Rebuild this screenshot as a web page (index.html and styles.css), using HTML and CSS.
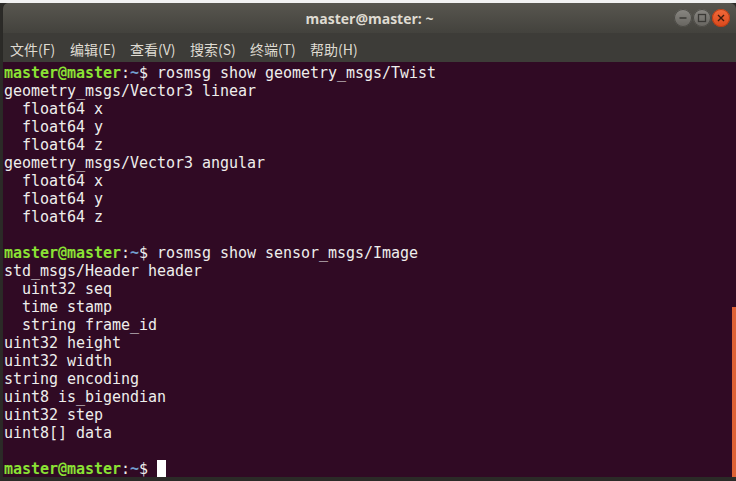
FILE: index.html
```html
<!DOCTYPE html>
<html lang="zh-CN">
<head>
    <meta charset="UTF-8">
    <title>master@master: ~</title>
    <link rel="stylesheet" href="styles.css">
</head>
<body>
    <div class="window">
        <div class="titlebar">
            <span class="title">master@master: ~</span>
            <div class="controls">
                <span class="btn btn-min"><svg width="10" height="10" viewBox="0 0 10 10"><path d="M1.5 5h7" stroke="#3a3935" stroke-width="1.4"/></svg></span>
                <span class="btn btn-max"><svg width="10" height="10" viewBox="0 0 10 10"><rect x="1.5" y="1.5" width="7" height="7" fill="none" stroke="#3a3935" stroke-width="1.3"/></svg></span>
                <span class="btn btn-close"><svg width="10" height="10" viewBox="0 0 10 10"><path d="M2 2l6 6M8 2l-6 6" stroke="#3c1a0c" stroke-width="1.4"/></svg></span>
            </div>
        </div>
        <div class="menubar">
            <span class="menu-item">文件(F)</span>
            <span class="menu-item">编辑(E)</span>
            <span class="menu-item">查看(V)</span>
            <span class="menu-item">搜索(S)</span>
            <span class="menu-item">终端(T)</span>
            <span class="menu-item">帮助(H)</span>
        </div>
        <div class="terminal">
            <div class="output">
                <div class="line"><span class="user">master@master</span>:<span class="path">~</span>$ rosmsg show geometry_msgs/Twist</div>
                <div class="line">geometry_msgs/Vector3 linear</div>
                <div class="line">  float64 x</div>
                <div class="line">  float64 y</div>
                <div class="line">  float64 z</div>
                <div class="line">geometry_msgs/Vector3 angular</div>
                <div class="line">  float64 x</div>
                <div class="line">  float64 y</div>
                <div class="line">  float64 z</div>
                <div class="line"></div>
                <div class="line"><span class="user">master@master</span>:<span class="path">~</span>$ rosmsg show sensor_msgs/Image</div>
                <div class="line">std_msgs/Header header</div>
                <div class="line">  uint32 seq</div>
                <div class="line">  time stamp</div>
                <div class="line">  string frame_id</div>
                <div class="line">uint32 height</div>
                <div class="line">uint32 width</div>
                <div class="line">string encoding</div>
                <div class="line">uint8 is_bigendian</div>
                <div class="line">uint32 step</div>
                <div class="line">uint8[] data</div>
                <div class="line"></div>
                <div class="line"><span class="user">master@master</span>:<span class="path">~</span>$ <span class="cursor"></span></div>
            </div>
            <div class="scrollbar"><div class="thumb"></div></div>
        </div>
    </div>
</body>
</html>
```

FILE: styles.css
```css
html, body {
    margin: 0;
    padding: 0;
}
body {
    width: 736px;
    height: 481px;
    overflow: hidden;
    padding-top: 3px;
    box-sizing: border-box;
    background: linear-gradient(#f2f2f2 0, #f2f2f2 3px, #2b2a27 3px);
}
.window {
    margin-left: 2px;
    display: flex;
    flex-direction: column;
    height: 474px;
    border-radius: 6px 6px 0 0;
    overflow: hidden;
    border-left: 1px solid #2a2926;
}
.titlebar {
    height: 30px;
    background: linear-gradient(#58564f, #43423d);
    display: flex;
    align-items: center;
    justify-content: center;
    position: relative;
}
.title {
    font-family: "Open Sans", "DejaVu Sans", sans-serif;
    font-weight: bold;
    font-size: 14px;
    color: #dfdbd2;
}
.controls {
    position: absolute;
    right: 6px;
    top: 6px;
    display: flex;
    gap: 1px;
}
.btn {
    width: 18px;
    height: 18px;
    border-radius: 50%;
    display: flex;
    align-items: center;
    justify-content: center;
    background: linear-gradient(#8a8883, #66645f);
    box-shadow: inset 0 0 0 1px #4a4944;
}
.btn-close {
    background: linear-gradient(#f26a3a, #d9481c);
    box-shadow: inset 0 0 0 1px #b53c15;
}
.menubar {
    height: 29px;
    background: #3d3c38;
    display: flex;
    align-items: center;
    padding-left: 7px;
    font-family: "Noto Sans CJK SC", "Noto Sans", sans-serif;
    font-size: 14px;
    color: #dfdbd2;
}
.menu-item {
    width: 60px;
    padding-top: 2px;
}
.terminal {
    flex: 1;
    background: #300a24;
    display: flex;
    min-height: 0;
}
.output {
    flex: 1;
    padding: 2px 0 0 1px;
    font-family: "DejaVu Sans Mono", monospace;
    font-size: 15px;
    letter-spacing: -0.03px;
    color: #eeeeec;
}
.line {
    height: 18px;
    line-height: 18px;
    white-space: pre;
}
.user {
    color: #8ae234;
    font-weight: bold;
}
.path {
    color: #729fcf;
    font-weight: bold;
}
.cursor {
    display: inline-block;
    width: 9px;
    height: 17px;
    background: #ffffff;
    vertical-align: -3px;
}
.scrollbar {
    width: 4px;
    display: flex;
    flex-direction: column;
    justify-content: flex-end;
}
.thumb {
    height: 170px;
    background: #dd6135;
}
```
